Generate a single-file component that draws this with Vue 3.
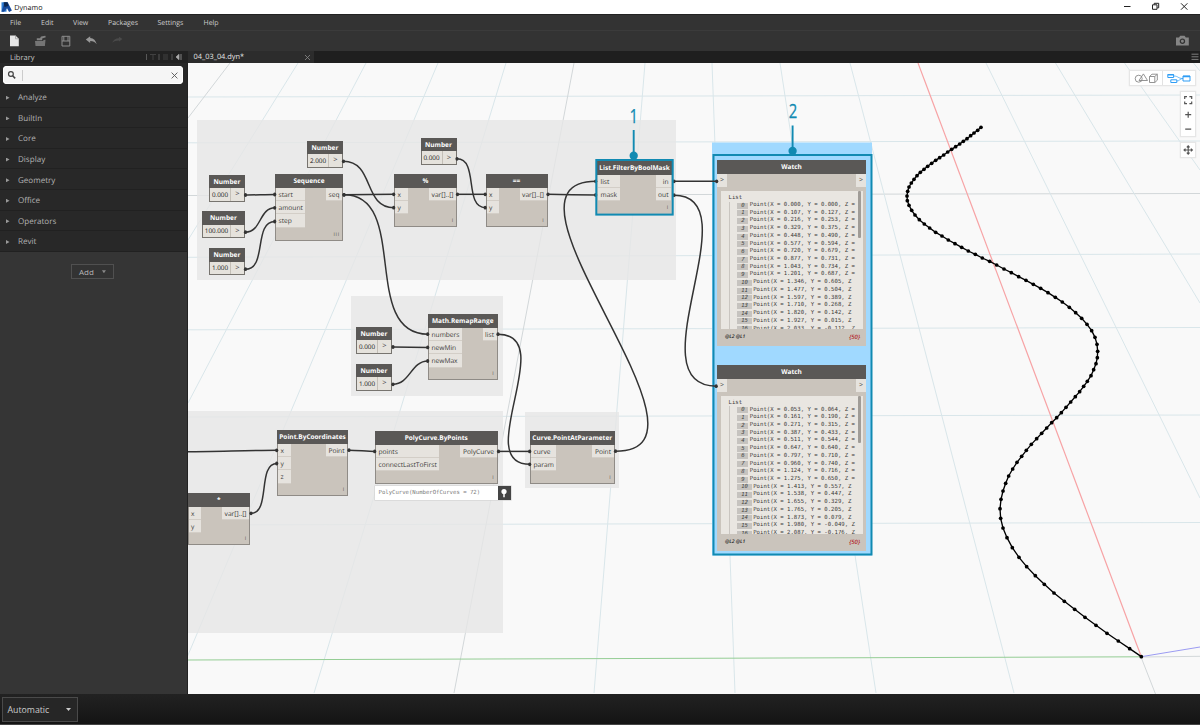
<script setup>
const menus = [
  { t: 'File', w: 31 }, { t: 'Edit', w: 32 }, { t: 'View', w: 35 },
  { t: 'Packages', w: 49.5 }, { t: 'Settings', w: 46 }, { t: 'Help', w: 30 },
]
const categories = ['Analyze', 'BuiltIn', 'Core', 'Display', 'Geometry', 'Office', 'Operators', 'Revit']

const grid = [
  [188, 97, 1200, 95, 'b'], [188, 142.8, 1200, 141, 'b'], [188, 195.5, 1200, 193.5, 'g'], [188, 257.3, 1200, 254, 'b'],
  [188, 329.8, 1200, 327.5, 'b'], [188, 417, 1200, 415, 'b'], [188, 525, 1200, 522.5, 'b'],
  [230, 63, 188, 118, 'g'], [298, 63, 188, 240, 'b'], [366, 63, 188, 403, 'b'], [438, 63, 172, 693, 'b'],
  [506, 63, 314, 693, 'b'], [574, 63, 454, 693, 'g'], [645, 63, 594, 693, 'b'], [712, 63, 735, 693, 'b'],
  [780, 63, 876, 693, 'b'], [850, 63, 1014, 693, 'b'], [986, 63, 1200, 498, 'b'], [1055.5, 63, 1200, 303, 'b'],
  [1124.5, 63, 1200, 170, 'b'], [1193.5, 63, 1200, 71, 'b'],
  [1141, 657, 1155.5, 694, 'g'], [1141, 657, 1200, 656.3, 'g'],
  [918, 63, 1141.3, 656.7, 'red'], [188, 660, 1141.3, 656.8, 'green'], [1141.3, 656.7, 1200, 647, 'blue'],
]

const groups = [
  [197, 120, 479, 160], [351, 296, 152, 100], [188, 411, 315, 222], [525, 412, 94, 76],
]

// Curve vertices in a local space of three units per pixel
const curve = [
  [303,202],[293,211],[282,219],[272,227],[261,236],[250,244],[239,252],[227,260],[215,268],[203,276],[191,285],[179,293],
  [167,301],[155,310],[143,319],[132,328],[121,337],[111,347],[102,358],[94,369],[87,381],[83,394],[81,408],[82,422],
  [87,436],[95,451],[105,465],[118,479],[133,492],[149,504],[167,517],[186,528],[205,540],[225,551],[245,562],[265,573],
  [286,583],[307,594],[329,604],[350,615],[372,627],[394,638],[416,650],[438,661],[460,673],[482,685],[504,698],[526,712],
  [547,726],[568,742],[587,758],[605,775],[621,793],[635,812],[645,832],[651,853],[653,874],[652,893],[648,911],[641,929],
  [633,947],[622,964],[611,979],[599,995],[586,1010],[572,1026],[558,1042],[544,1058],[530,1073],[515,1088],[500,1104],
  [485,1120],[470,1136],[454,1153],[439,1171],[425,1189],[411,1207],[398,1227],[386,1248],[377,1270],[369,1293],[363,1318],
  [360,1346],[362,1375],[369,1404],[381,1433],[397,1463],[417,1492],[440,1520],[466,1547],[493,1573],[522,1599],[553,1624],
  [584,1648],[615,1672],[648,1696],[681,1720],[715,1743],[749,1766],[784,1790],
]
const curvePoints = curve.map((p) => p.join(',')).join(' ')

const wires = [
  [245.5, 195, 275, 194.5, 8], [245.5, 232.2, 275, 207.8, 16], [245.5, 269.2, 275, 221.5, 22],
  [343.5, 161.3, 394, 207.7, 31], [344, 194.8, 394, 194.3, 10], [344, 194.8, 428, 334.2, 66, 68],
  [457, 158.8, 485.5, 207.7, 22], [457.5, 194.3, 485.5, 194.3, 8], [548, 194.3, 596, 195, 8],
  [674, 181.3, 717, 181.3, 8], [674, 195.2, 716.5, 386.2, 79, 84],
  [498, 334.2, 530, 464.3, 62, 60], [393, 347, 428, 347.4, 8], [393, 384.3, 428, 361, 17],
  [186, 451.8, 277, 450.3, 20], [251, 513.3, 277, 463.5, 20], [349, 450.2, 375, 451.4, 8], [498.5, 451.4, 530, 451.4, 8],
  [615.5, 451.2, 596, 181.3, 119, 118],
].map(([x1, y1, x2, y2, a, b = a]) => ({
  d: `M${x1} ${y1}C${x1 + a} ${y1} ${x2 - b} ${y2} ${x2} ${y2}`, x1, y1, x2, y2,
}))

const numbers = [
  { x: 209, y: 174.5, w: 36, v: '0.000' }, { x: 202, y: 211.3, w: 43, v: '100.000' }, { x: 209, y: 248.3, w: 36, v: '1.000' },
  { x: 307, y: 140.5, w: 36, v: '2.000' }, { x: 420.5, y: 138, w: 36, v: '0.000' },
  { x: 356, y: 326.5, w: 36, v: '0.000' }, { x: 356, y: 363.7, w: 36, v: '1.000' },
]

const nodes = [
  { t: 'Sequence', x: 275, y: 173.5, w: 68, h: 67, i: ['start', 'amount', 'step'], o: ['seq'], l: 'III' },
  { t: '%', x: 394, y: 173.5, w: 63, h: 53.5, i: ['x', 'y'], o: ['var[]..[]'] },
  { t: '==', x: 485.5, y: 173.5, w: 62, h: 53.5, i: ['x', 'y'], o: ['var[]..[]'] },
  { t: 'List.FilterByBoolMask', x: 597, y: 160.5, w: 75, h: 53, i: ['list', 'mask'], o: ['in', 'out'], sel: true },
  { t: 'Math.RemapRange', x: 428, y: 313.5, w: 69.5, h: 66.5, i: ['numbers', 'newMin', 'newMax'], o: ['list'] },
  { t: 'Point.ByCoordinates', x: 277, y: 429.5, w: 71, h: 66.3, i: ['x', 'y', 'z'], o: ['Point'] },
  { t: 'PolyCurve.ByPoints', x: 375, y: 430.5, w: 122.5, h: 53, i: ['points', 'connectLastToFirst'], o: ['PolyCurve'] },
  { t: 'Curve.PointAtParameter', x: 530, y: 430.5, w: 84.5, h: 53, i: ['curve', 'param'], o: ['Point'] },
  { t: '*', x: 187.5, y: 492.5, w: 62.5, h: 52.5, i: ['x', 'y'], o: ['var[]..[]'] },
]

const watches = [
  {
    x: 717, y: 160,
    rows: ['0.000 0.000', '0.107 0.127', '0.216 0.253', '0.329 0.375', '0.448 0.490', '0.577 0.594', '0.720 0.679', '0.877 0.731',
      '1.043 0.734', '1.201 0.687', '1.346 0.605', '1.477 0.504', '1.597 0.389', '1.710 0.268', '1.820 0.142', '1.927 0.015', '2.033 -0.112'],
  },
  {
    x: 717, y: 364.5,
    rows: ['0.053 0.064', '0.161 0.190', '0.271 0.315', '0.387 0.433', '0.511 0.544', '0.647 0.640', '0.797 0.710', '0.960 0.740',
      '1.124 0.716', '1.275 0.650', '1.413 0.557', '1.538 0.447', '1.655 0.329', '1.765 0.205', '1.873 0.079', '1.980 -0.049', '2.087 -0.176'],
  },
]
const rowText = (r, i) => {
  const [a, b] = r.split(' ')
  return `Point(X = ${a}, Y = ${b}, Z${i < 10 ? ' =' : ''}`
}
const place = (n) => ({ left: n.x + 'px', top: n.y + 'px', width: n.w ? n.w + 'px' : null, height: n.h ? n.h + 'px' : null })
</script>

<template>
  <div class="window">
    <header class="titlebar">
      <svg class="logo" width="11" height="12" viewBox="0 0 11 12">
        <path d="M.5 1.300h5v9.400h-5z" fill="#2f7fd6" />
        <path d="M3.500 1.300h3.200l4.200 8.200-2.800 1.500L6 7.300 3 10.700H.5z" fill="#164a9c" />
        <path d="M2.500 1.300L6.500 1.300l1 3.600L3.500 6z" fill="#0a2650" />
      </svg>
      <span class="app-name">Dynamo</span>
      <svg class="win-buttons" width="70" height="14" viewBox="0 0 70 14" fill="none" stroke="#222" stroke-width="1">
        <path d="M0 6.500h6.500M28.500 4.800h4.500v4.500h-4.500zM30.200 4.600V3.300h4.500v4.500h-1.400M57 3.300l6.400 6.400M63.400 3.300L57 9.700" />
      </svg>
    </header>
    <nav class="menubar">
      <span v-for="m in menus" :key="m.t" :style="{ width: m.w + 'px' }">{{ m.t }}</span>
    </nav>
    <div class="toolbar">
      <svg width="130" height="20" viewBox="0 0 130 20">
        <path d="M10 4.500h5.500l3.300 3.300v7.400H10z" fill="#e6e6e6" /><path d="M15.500 4.500v3.300h3.300" fill="none" stroke="#999" stroke-width=".7" />
        <path d="M36.800 7.300h3.200l1-1.800 4.300-.8.500 1.600-3.600 1.300v1.600h-5.400z" fill="#828282" />
        <path d="M35 9.900h8.300V9l2.200-.3-.6 6.300H35.500z" fill="#757575" />
        <path d="M62 5.300h7.800v9.700H62zM62 10h7.800M63.800 5.300v4.700M68 5.300v4.700" fill="none" stroke="#8e8e8e" stroke-width="1" />
        <path d="M85.800 8.500l4.400-3.300v1.900c3.500.2 5.500 2.500 6.500 6.100-1.700-2.200-3.500-3.200-6.500-3.200v2z" fill="#999" />
        <path d="M122.500 8l-3.500-2.300v1.500c-3.500 0-5.800 1.700-6.800 4.600 1.800-1.700 3.800-2.400 6.800-2.400v1.200z" fill="#4a4a4a" />
      </svg>
      <svg class="camera" width="15" height="12" viewBox="0 0 15 12">
        <path d="M1 2.500h3l1.200-1.700h4.400l1.200 1.700h3v8H1z" fill="#858585" />
        <circle cx="7.400" cy="6.300" r="2.100" fill="none" stroke="#333" stroke-width="1.300" />
      </svg>
    </div>

    <div class="main">
      <aside class="sidebar">
        <div class="lib-head">
          <span>Library</span>
          <svg width="40" height="9" viewBox="0 0 40 9">
            <path d="M1.500 1v6M14 1v6M27 1v6" stroke="#666" stroke-width=".8" />
            <path d="M5 1.500h6M8 1.500V7M18 2h5M18 4h5M18 6h5" stroke="#454545" fill="none" stroke-width=".9" />
            <path d="M34 1.300v5.400L31 4zM36 1v6" fill="#aaa" stroke="#aaa" stroke-width=".7" />
          </svg>
        </div>
        <div class="search-wrap">
          <div class="search">
            <svg width="10" height="10" viewBox="0 0 10 10" fill="none" stroke="#444">
              <circle cx="3.900" cy="4" r="2.400" stroke-width="1.200" /><path d="M5.600 5.800l2.600 2.600" stroke-width="1.500" />
            </svg>
            <i class="caret"></i>
            <svg width="7" height="7" viewBox="0 0 7 7" fill="none" stroke="#555" stroke-width=".9"><path d="M.6.6l5.800 5.800M6.400.6L.6 6.400" /></svg>
          </div>
        </div>
        <ul class="cats">
          <li v-for="c in categories" :key="c"><i class="tri"></i>{{ c }}</li>
        </ul>
        <div class="add-row"><button class="add">Add<i class="down"></i></button></div>
      </aside>

      <section class="workspace">
        <div class="tabs">
          <div class="tab">
            <span>04_03_04.dyn*</span>
            <svg width="7" height="7" viewBox="0 0 7 7" fill="none" stroke="#8a8a8a" stroke-width=".8"><path d="M1 1l5 5M6 1L1 6" /></svg>
          </div>
          <svg class="burger" width="8" height="8" viewBox="0 0 8 8"><path d="M.5 1.200h7M.5 3.800h7M.5 6.400h7" stroke="#888" stroke-width=".9" /></svg>
        </div>
        <div class="canvas">
          <div class="world">
            <svg class="layer" width="1200" height="725" viewBox="0 0 1200 725">
              <line v-for="(l, k) in grid" :key="k" :x1="l[0]" :y1="l[1]" :x2="l[2]" :y2="l[3]" :class="'ln ' + l[4]" />
              <g transform="translate(880 60) scale(.33333)">
                <polyline :points="curvePoints" fill="none" stroke="#000" stroke-width="4" />
                <circle v-for="(p, k) in curve" :key="k" :cx="p[0]" :cy="p[1]" r="5.600" />
              </g>
              <rect v-for="(g, k) in groups" :key="k" :x="g[0]" :y="g[1]" :width="g[2]" :height="g[3]" fill="#e6e6e6" fill-opacity=".8" />
              <rect x="712" y="142.500" width="160" height="413" fill="#a0d9ff" />
              <rect x="713.500" y="155" width="158" height="399.500" fill="none" stroke="#118ab2" stroke-width="2" />
              <g class="wires">
                <path v-for="(w, k) in wires" :key="k" :d="w.d" />
              </g>
            </svg>

            <div v-for="(n, k) in numbers" :key="'n' + k" class="number" :style="place(n)">
              <div class="head">Number</div>
              <div class="num-body"><span class="val">{{ n.v }}</span><span class="arrow">&gt;</span></div>
            </div>

            <div v-for="n in nodes" :key="n.t" class="node" :class="{ sel: n.sel }" :style="place(n)">
              <div class="head">{{ n.t }}</div>
              <div class="ports">
                <div class="ins"><span v-for="p in n.i" :key="p">{{ p }}</span></div>
                <div class="outs"><span v-for="p in n.o" :key="p">{{ p }}</span></div>
              </div>
              <span class="lace">{{ n.l || 'I' }}</span>
            </div>

            <div class="preview">
              <span>PolyCurve(NumberOfCurves = 72)</span>
              <b><svg width="8" height="10" viewBox="0 0 8 10"><circle cx="4" cy="3.500" r="2.600" fill="#fff" /><path d="M4 5v4.300" stroke="#fff" stroke-width="1.500" /></svg></b>
            </div>

            <div v-for="(w, k) in watches" :key="'w' + k" class="watch" :style="place(w)">
              <div class="head">Watch</div>
              <div class="wports"><span>&gt;</span><span>&gt;</span></div>
              <div class="wlist">
                <div class="wtitle">List</div>
                <div class="wrows">
                  <div v-for="(r, i) in w.rows" :key="i" class="wrow"><i>{{ i }}</i>{{ rowText(r, i) }}</div>
                </div>
                <div class="thumb"></div>
              </div>
              <div class="wfoot"><span>@L2 @L1</span><em>{50}</em></div>
            </div>

            <svg class="layer" width="1200" height="725" viewBox="0 0 1200 725">
              <g fill="#333">
                <template v-for="(w, k) in wires" :key="k">
                  <ellipse :cx="w.x1" :cy="w.y1" rx="1.600" ry="1.900" /><ellipse :cx="w.x2 - .3" :cy="w.y2" rx="1.600" ry="1.900" />
                </template>
              </g>
              <rect x="596.300" y="160" width="76.400" height="54.600" fill="none" stroke="#118ab2" stroke-width="2" />
              <g fill="#118ab2" stroke="#118ab2" stroke-width="1.900">
                <path d="M633.700 130v25M792.600 125.500v25" /><circle cx="633.700" cy="155.700" r="3.200" /><circle cx="792.600" cy="151" r="3.200" />
              </g>
              <text class="callout" x="629.500" y="122.500" textLength="8.500" lengthAdjust="spacingAndGlyphs">1</text>
              <text class="callout" x="788.800" y="118" textLength="8.500" lengthAdjust="spacingAndGlyphs">2</text>
            </svg>
          </div>

          <div class="controls">
            <div class="modes">
              <div class="mode">
                <svg width="25" height="11" viewBox="0 0 25 11" fill="none" stroke="#888" stroke-width=".9">
                  <circle cx="4.700" cy="5.700" r="3.500" /><path d="M5 7.500h8.500L9.400.9zM15.500 3.500h5.300V9.500h-5.300zM15.500 3.500L18 1.200h5.300v6L20.800 9.500M20.800 3.500l2.500-2.300" />
                </svg>
              </div>
              <div class="mode">
                <svg width="24" height="11" viewBox="0 0 24 11" fill="none" stroke="#2e9df5" stroke-width="1">
                  <path d="M.8 1.500h5.800v3H.8zM3.800 6.800h6v2.700h-6zM16 3h7v5h-7z" /><path d="M.8 1.700h5.800M16 3.600h7" stroke-width="1.500" /><path d="M6.600 3c5 0 4 2.500 9.400 2.500M9.800 8c3 0 3-2.500 6.200-2.500" stroke-width=".7" />
                </svg>
              </div>
            </div>
            <div class="zoom">
              <svg width="14" height="46" viewBox="0 0 14 46" fill="none" stroke="#555" stroke-width="1.200">
                <path d="M3.700 7V4.700H6M8.400 4.700h2.300V7M3.700 9.400v2.300H6M8.400 11.700h2.300V9.400M4.200 22.700h6M7.200 19.700v6M4.200 37.200h6" />
              </svg>
            </div>
            <div class="pan">
              <svg width="14" height="14" viewBox="0 0 14 14" fill="none" stroke="#555" stroke-width="1.100">
                <path d="M7.200 3v8M3.200 7h8M5.800 4.300l1.400-1.500 1.400 1.500M5.800 9.700l1.400 1.500 1.400-1.500M4.500 5.600L3 7l1.500 1.400M9.900 5.600L11.400 7 9.900 8.400" />
              </svg>
            </div>
          </div>
        </div>
      </section>
    </div>

    <footer class="bottom"><button class="run">Automatic<i class="down light"></i></button></footer>
  </div>
</template>

<style>
html, body { margin: 0; overflow: hidden; }
</style>

<style scoped>
* { box-sizing: border-box; }
.window { width: 1200px; height: 725px; display: flex; flex-direction: column; font-family: "Open Sans", sans-serif; background: #1a1a1a; overflow: hidden; text-rendering: geometricPrecision; }
svg { display: block; flex: none; }
button { font-family: inherit; padding: 0; margin: 0; }

.titlebar { height: 14px; background: #fff; display: flex; align-items: center; flex: none; }
.logo { margin-left: 1px; }
.app-name { font-size: 7.2px; color: #111; margin-left: 2.300px; padding-top: 1px; }
.win-buttons { margin-left: auto; margin-right: 6px; }

.menubar { height: 16px; background: #333; border-top: 1px solid #222; padding: 1px 0 0 10px; display: flex; align-items: center; font-size: 7px; color: #ccc; flex: none; }
.menubar span { flex: none; }
.toolbar { height: 21px; background: #333; border-top: 1px solid #3b3b3b; display: flex; align-items: center; justify-content: space-between; flex: none; }
.camera { margin-right: 10.500px; }

.main { flex: 1; display: flex; min-height: 0; }
.sidebar { width: 188px; background: #353535; display: flex; flex-direction: column; border-right: 1px solid #222; flex: none; }
.lib-head { height: 12px; background: #222; display: flex; align-items: center; justify-content: space-between; padding: 1px 2px 0 10px; font-size: 7.500px; color: #c4c4c4; }
.search-wrap { background: #282828; padding: 3px 4px 3px 3px; }
.search { height: 18px; background: #f5f5f5; border-radius: 4px; display: flex; align-items: center; padding: 0 5px 0 4px; box-shadow: inset 0 0 0 1px #fff; }
.caret { width: 1px; height: 11px; background: #ccc; margin-left: 5px; margin-right: auto; }
.cats { list-style: none; margin: 0; padding: 0; background: #282828; }
.cats li { height: 20.600px; display: flex; align-items: center; font-size: 8.050px; color: #b2b2b2; border-bottom: 1px solid #212121; padding: 2px 0 0 6px; }
.tri { width: 3.500px; height: 4px; background: #999; clip-path: polygon(0 0, 100% 50%, 0 100%); margin-right: 8.500px; }
.add-row { display: flex; justify-content: center; padding-top: 16px; background: #353535; margin-top: -2.500px; border-top: 1px solid #2b2b2b; }
.add-row { margin-top: 0; padding-top: 12.500px; border: 0; }
.add { width: 43px; height: 15px; margin-right: 2px; background: #333; border: 1px solid #505050; color: #b5b5b5; font-size: 8px; display: flex; align-items: center; justify-content: center; gap: 8px; }
.down { width: 4px; height: 3px; background: #888; clip-path: polygon(0 0, 100% 0, 50% 100%); }
.light { background: #ccc; width: 5px; }

.workspace { flex: 1; display: flex; flex-direction: column; min-width: 0; }
.tabs { height: 12px; background: #1f1f1f; display: flex; align-items: center; justify-content: space-between; flex: none; }
.tab { width: 126px; height: 12px; background: #2c2c2c; display: flex; align-items: center; justify-content: space-between; padding: 0 3px 0 5.500px; font-size: 7.400px; color: #e4e4e4; }
.burger { margin-right: 1px; }
.canvas { flex: 1; position: relative; overflow: hidden; background: #f9f9f9; }
.world { position: absolute; left: -188px; top: -63px; width: 1200px; height: 725px; }
.layer { position: absolute; left: 0; top: 0; }

.ln { stroke-width: 1; }
.b { stroke: #d9e6ea; }
.g { stroke: #d2d7d9; }
.red { stroke: #f7a3a5; stroke-width: 1.200; }
.green { stroke: #94cd94; }
.blue { stroke: #9b9bf2; }
.wires path { fill: none; stroke: #333; stroke-width: 1.500; }
.callout { font-size: 19.500px; fill: #118ab2; stroke: #118ab2; stroke-width: .3; font-family: "Open Sans", sans-serif; }

.head { height: 13.300px; line-height: 13.300px; background: #5a5856; color: #fff; font-weight: 700; font-size: 6.500px; text-align: center; white-space: nowrap; flex: none; }
.number { position: absolute; height: 27px; display: flex; flex-direction: column; border: 1px solid #77746f; border-top: 0; background: #e5e2dc; }
.number .head { margin: 0 -1px; }
.num-body { flex: 1; display: flex; align-items: center; font-size: 6.300px; color: #111; }
.val { flex: 1; text-align: center; }
.arrow { width: 14px; border-left: 1px solid #c4bfb7; align-self: stretch; display: flex; align-items: center; justify-content: center; color: #333; font-size: 7.500px; }

.node { position: absolute; background: #cac4bc; border: 1px solid #8f8b86; border-top: 0; display: flex; flex-direction: column; }
.node .head { margin: 0 -1px; height: 14px; line-height: 14.500px; }
.ports { display: flex; justify-content: space-between; align-items: flex-start; font-size: 6.650px; color: #3b3a38; line-height: 13px; }
.ins, .outs { display: flex; flex-direction: column; }
.ins span, .outs span { height: 13.400px; background: #e6e3de; padding: 0 2.500px; min-width: 12.500px; border-bottom: .5px solid #d3cec7; white-space: nowrap; }
.outs span { text-align: right; }
.lace { position: absolute; right: 2px; bottom: 1px; font-size: 5px; line-height: 7px; color: #5b5854; letter-spacing: .8px; }
.sel { border-color: #cac4bc; }

.preview { position: absolute; left: 375px; top: 485.700px; width: 135.500px; height: 14.700px; display: flex; background: #fff; box-shadow: 0 0 0 .5px #ccc; }
.preview span { flex: 1; font: 5.630px/14px "DejaVu Sans Mono", monospace; color: #7a7a7a; padding-left: 3.500px; white-space: nowrap; }
.preview b { width: 12.700px; background: #454545; display: flex; align-items: center; justify-content: center; flex: none; }

.watch { position: absolute; width: 149px; height: 186.300px; background: #cac4bc; display: flex; flex-direction: column; }
.watch .head { height: 14px; line-height: 14px; }
.wports { display: flex; justify-content: space-between; height: 13px; flex: none; }
.wports span { width: 10px; background: #e6e3de; font-size: 7px; line-height: 13px; text-align: center; color: #333; }
.wlist { position: relative; margin: 4px 3px 0 3.500px; height: 138px; background: #e9e6e1; overflow: hidden; font: 5.630px/7.733px "DejaVu Sans Mono", monospace; color: #3b3a38; flex: none; white-space: pre; }
.wtitle { padding: 4px 0 0 8px; height: 10.500px; }
.wrows { margin-left: 8.300px; border-left: 1px solid #c9c5c0; padding-left: 7.700px; }
.wrow { height: 7.733px; line-height: 8.700px; display: flex; align-items: center; }
.wrow i { background: #c6c3bf; height: 6px; line-height: 6px; padding: 0 3.600px 0 3.700px; margin-right: 1.700px; margin-top: .6px; color: #45433f; }
.thumb { position: absolute; right: 2px; top: 0; width: 3px; height: 47px; background: #a09c97; border-radius: 1px; }
.wfoot { flex: 1; display: flex; justify-content: space-between; align-items: center; padding: 0 6px 1px 8px; font-size: 5px; color: #222; }
.wfoot span { font-style: italic; font-weight: 600; }
.wfoot em { color: #b3272d; font-size: 6px; font-weight: 600; }

.controls { position: absolute; right: 4px; top: 7px; display: flex; flex-direction: column; align-items: flex-end; gap: 5px; }
.modes, .zoom, .pan { background: #fff; border: 1px solid #e6e6e6; box-shadow: 0 0 1px #ddd; }
.modes { display: flex; width: 67px; height: 16px; }
.mode { flex: 1; display: flex; align-items: center; justify-content: center; }
.mode + .mode { border-left: 1px solid #e2e2e2; }
.zoom { width: 16px; height: 46px; }
.pan { width: 16px; height: 16px; }

.bottom { height: 31px; background: linear-gradient(#222, #141414); border-bottom: 1px solid #444; padding: 3px 0 0 2px; flex: none; }
.run { width: 76px; height: 25px; background: #262626; border: 1px solid #4a4a4a; color: #ccc; font-size: 8.750px; display: flex; align-items: center; justify-content: space-between; padding: 0 6px 0 4.500px; }
</style>
